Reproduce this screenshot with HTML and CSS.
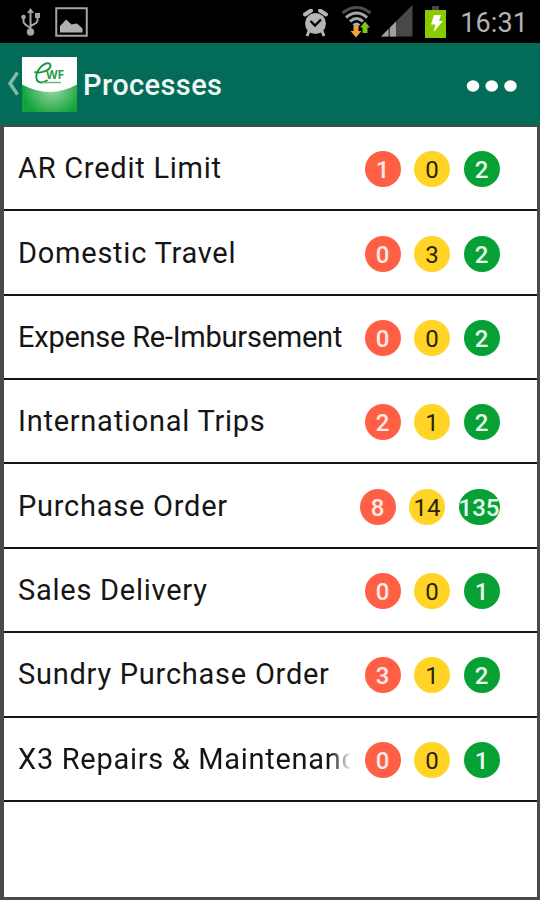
FILE: index.html
```html
<!DOCTYPE html>
<html lang="en">
<head>
    <meta charset="UTF-8">
    <meta name="viewport" content="width=device-width, initial-scale=1.0">
    <title>Processes</title>
    <link rel="stylesheet" href="styles.css">
</head>
<body>
    <div class="status-bar">
        <svg class="usb" width="20" height="28" viewBox="0 0 20 28" fill="none" stroke="#a5a5a5" stroke-width="2">
            <path d="M9.5 3v22M2.500 10v3.500q0 2.500 7 6.500M16.500 9v3.500q0 2.500-7 5.500"/>
            <path d="M9.500 0l3.500 5h-7z" fill="#a5a5a5" stroke="none"/>
            <circle cx="9.500" cy="24" r="3.700" fill="#a5a5a5" stroke="none"/>
            <circle cx="2.500" cy="9" r="2.300" fill="#a5a5a5" stroke="none"/>
            <path d="M14 5h5v5h-5z" fill="#a5a5a5" stroke="none"/>
        </svg>
        <svg class="picture" width="34" height="31" viewBox="0 0 34 31">
            <rect x="1.250" y="1.250" width="30.500" height="27.500" fill="none" stroke="#a5a5a5" stroke-width="2"/>
            <path d="M5 25.500v-6.500l3-3 3-3.500 5.500 5 5.500-1 5.500 5v4z" fill="#b0b0b0"/>
        </svg>
        <div class="status-right">
            <svg class="alarm" width="26" height="28" viewBox="0 0 26 28">
                <circle cx="12.500" cy="14.500" r="10.500" fill="#b5b5b5"/>
                <path d="M2 5.500l6-4M23 5.500l-6-4" stroke="#b5b5b5" stroke-width="4" stroke-linecap="round"/>
                <path d="M6 22l-2 5M19 22l2 5" stroke="#b5b5b5" stroke-width="3"/>
                <path d="M7.500 12l4.500 4.500 6-6" fill="none" stroke="#000" stroke-width="2.300"/>
            </svg>
            <svg class="wifi" width="32" height="32" viewBox="0 0 32 32" fill="none">
                <path d="M1.500 7q14-11 28 0" stroke="#4d4d4d" stroke-width="3"/>
                <path d="M5 11.500q10.500-9 21 0M9 15.500q6.500-6 13 0" stroke="#a8a8a8" stroke-width="3"/>
                <path d="M11.500 18.500q4-4 8 0l-4 3.500z" fill="#a8a8a8"/>
                <path d="M12.500 20h5v5h3l-5.500 6.500-5.500-6.500h3z" fill="#f7a037"/>
                <path d="M24 15.500l5 6h-2.500v5.500h-5v-5.500h-2.500z" fill="#80c41c"/>
            </svg>
            <svg class="signal" width="32" height="32" viewBox="0 0 32 32">
                <path d="M0 31.500L31.500 0v31.500z" fill="#484848"/>
                <path d="M0 31.500L7.500 24v7.500zM9 31.500v-9L15 16.500v15z" fill="#a0a0a0"/>
            </svg>
            <svg class="battery" width="22" height="32" viewBox="0 0 22 32">
                <path d="M7 0h7v5H7z" fill="#484848"/>
                <path d="M0 4h21v28H0z" fill="#8c0"/>
                <path d="M9 9h7l-2 6h4L8.500 26l2-7.500H6z" fill="#fff"/>
            </svg>
            <span class="clock">16:31</span>
        </div>
    </div>

    <div class="action-bar">
        <svg class="back" width="12" height="26" viewBox="0 0 12 26">
            <path d="M10.500 1.500L3 12.500l7.500 11" fill="none" stroke="#81b9a8" stroke-width="3.500"/>
        </svg>
        <svg class="logo" width="55" height="55" viewBox="0 0 55 55">
            <defs>
                <radialGradient id="glow" cx="0.550" cy="0.550" r="0.550">
                    <stop offset="0" stop-color="#a3daa9"/>
                    <stop offset="1" stop-color="#12a33b"/>
                </radialGradient>
            </defs>
            <rect width="55" height="55" fill="url(#glow)"/>
            <path d="M0 0h55v27.500q-27 15-55 0z" fill="#fff"/>
            <path d="M12.500 15c7 2 16-2 16-6.500 0-4-7-2.500-11 3-5 7-4 14 2 14 2.500 0 4-1 6-2.500" fill="none" stroke="#139638" stroke-width="1.900"/>
            <path d="M20 25.500h19" stroke="#6cb87f" stroke-width="1.500"/>
            <text class="logo-text" x="24" y="22">WF</text>
        </svg>
        <h1 class="title">Processes</h1>
        <svg class="more" width="52" height="14" viewBox="0 0 52 14" fill="#fff">
            <ellipse cx="7" cy="7" rx="6.300" ry="5.700"/>
            <ellipse cx="25.700" cy="7" rx="6.300" ry="5.700"/>
            <ellipse cx="44.500" cy="7" rx="6.300" ry="5.700"/>
        </svg>
    </div>

    <div class="list">
        <div class="row">
            <span class="name">AR Credit Limit</span>
            <span class="badge red">1</span>
            <span class="badge yellow">0</span>
            <span class="badge green">2</span>
        </div>
        <div class="row">
            <span class="name">Domestic Travel</span>
            <span class="badge red">0</span>
            <span class="badge yellow">3</span>
            <span class="badge green">2</span>
        </div>
        <div class="row">
            <span class="name tight">Expense Re-Imbursement</span>
            <span class="badge red">0</span>
            <span class="badge yellow">0</span>
            <span class="badge green">2</span>
        </div>
        <div class="row">
            <span class="name">International Trips</span>
            <span class="badge red">2</span>
            <span class="badge yellow">1</span>
            <span class="badge green">2</span>
        </div>
        <div class="row">
            <span class="name">Purchase Order</span>
            <span class="badge red">8</span>
            <span class="badge yellow">14</span>
            <span class="badge green wide">135</span>
        </div>
        <div class="row">
            <span class="name">Sales Delivery</span>
            <span class="badge red">0</span>
            <span class="badge yellow">0</span>
            <span class="badge green">1</span>
        </div>
        <div class="row">
            <span class="name">Sundry Purchase Order</span>
            <span class="badge red">3</span>
            <span class="badge yellow">1</span>
            <span class="badge green">2</span>
        </div>
        <div class="row">
            <span class="name fade">X3 Repairs &amp; Maintenanc</span>
            <span class="badge red">0</span>
            <span class="badge yellow">0</span>
            <span class="badge green">1</span>
        </div>
    </div>
</body>
</html>
```
FILE: styles.css
```css
* {
    box-sizing: border-box;
}
body {
    margin: 0;
    height: 900px;
    display: flex;
    flex-direction: column;
    font-family: Roboto, sans-serif;
    background: #4a4a4a;
    overflow: hidden;
}
svg {
    flex-shrink: 0;
}
.status-bar {
    height: 43px;
    display: flex;
    align-items: flex-start;
    padding: 7px 12px 0 21px;
    background: #000;
}
.usb {
    margin-top: 1px;
}
.picture {
    margin-left: 14px;
}
.status-right {
    display: flex;
    margin-left: auto;
}
.alarm {
    margin: 2px 12px 0 0;
}
.wifi {
    margin: -1px 8px 0 0;
}
.signal {
    margin: -2px 12px 0 0;
}
.battery {
    margin: -1px 13px 0 0;
}
.clock {
    height: 31px;
    font-size: 27px;
    line-height: 32px;
    letter-spacing: 0.1px;
    color: #b3b3b3;
}
.action-bar {
    height: 82px;
    display: flex;
    align-items: center;
    padding: 0 22px 0 7px;
    background: #036c59;
}
.back {
    margin-right: 3px;
}
.logo-text {
    font: bold 12px "Open Sans", sans-serif;
    fill: #2a9d4b;
}
.title {
    margin: 2px auto 0 6px;
    font-size: 29px;
    font-weight: 500;
    letter-spacing: 0.4px;
    color: #f0f8f6;
}
.more {
    margin-top: 4px;
}
.list {
    flex: 1;
    margin: 2px 3px 3px 4px;
    background: #fff;
}
.row {
    height: 84.360px;
    display: flex;
    align-items: center;
    gap: 13.500px;
    padding-right: 37.500px;
    padding-left: 14px;
    border-bottom: 2px solid #161616;
}
.name {
    flex: 1;
    min-width: 0;
    font-size: 29px;
    line-height: 40px;
    letter-spacing: 0.750px;
    white-space: nowrap;
    overflow: hidden;
    color: #151515;
}
.tight {
    letter-spacing: -0.240px;
}
.fade {
    letter-spacing: 0.700px;
    -webkit-mask-image: linear-gradient(to right, #000 94%, transparent);
    mask-image: linear-gradient(to right, #000 94%, transparent);
}
.badge {
    width: 36px;
    height: 36px;
    margin-top: 2px;
    border-radius: 50%;
    text-align: center;
    font-size: 24px;
    line-height: 38px;
}
.wide {
    width: 41px;
}
.red {
    background: #ff6045;
    color: #ffeae6;
    font-weight: 500;
}
.yellow {
    background: #ffd426;
    color: #2b2408;
}
.green {
    background: #06a035;
    color: #e9f8ed;
    font-weight: 500;
}
```
